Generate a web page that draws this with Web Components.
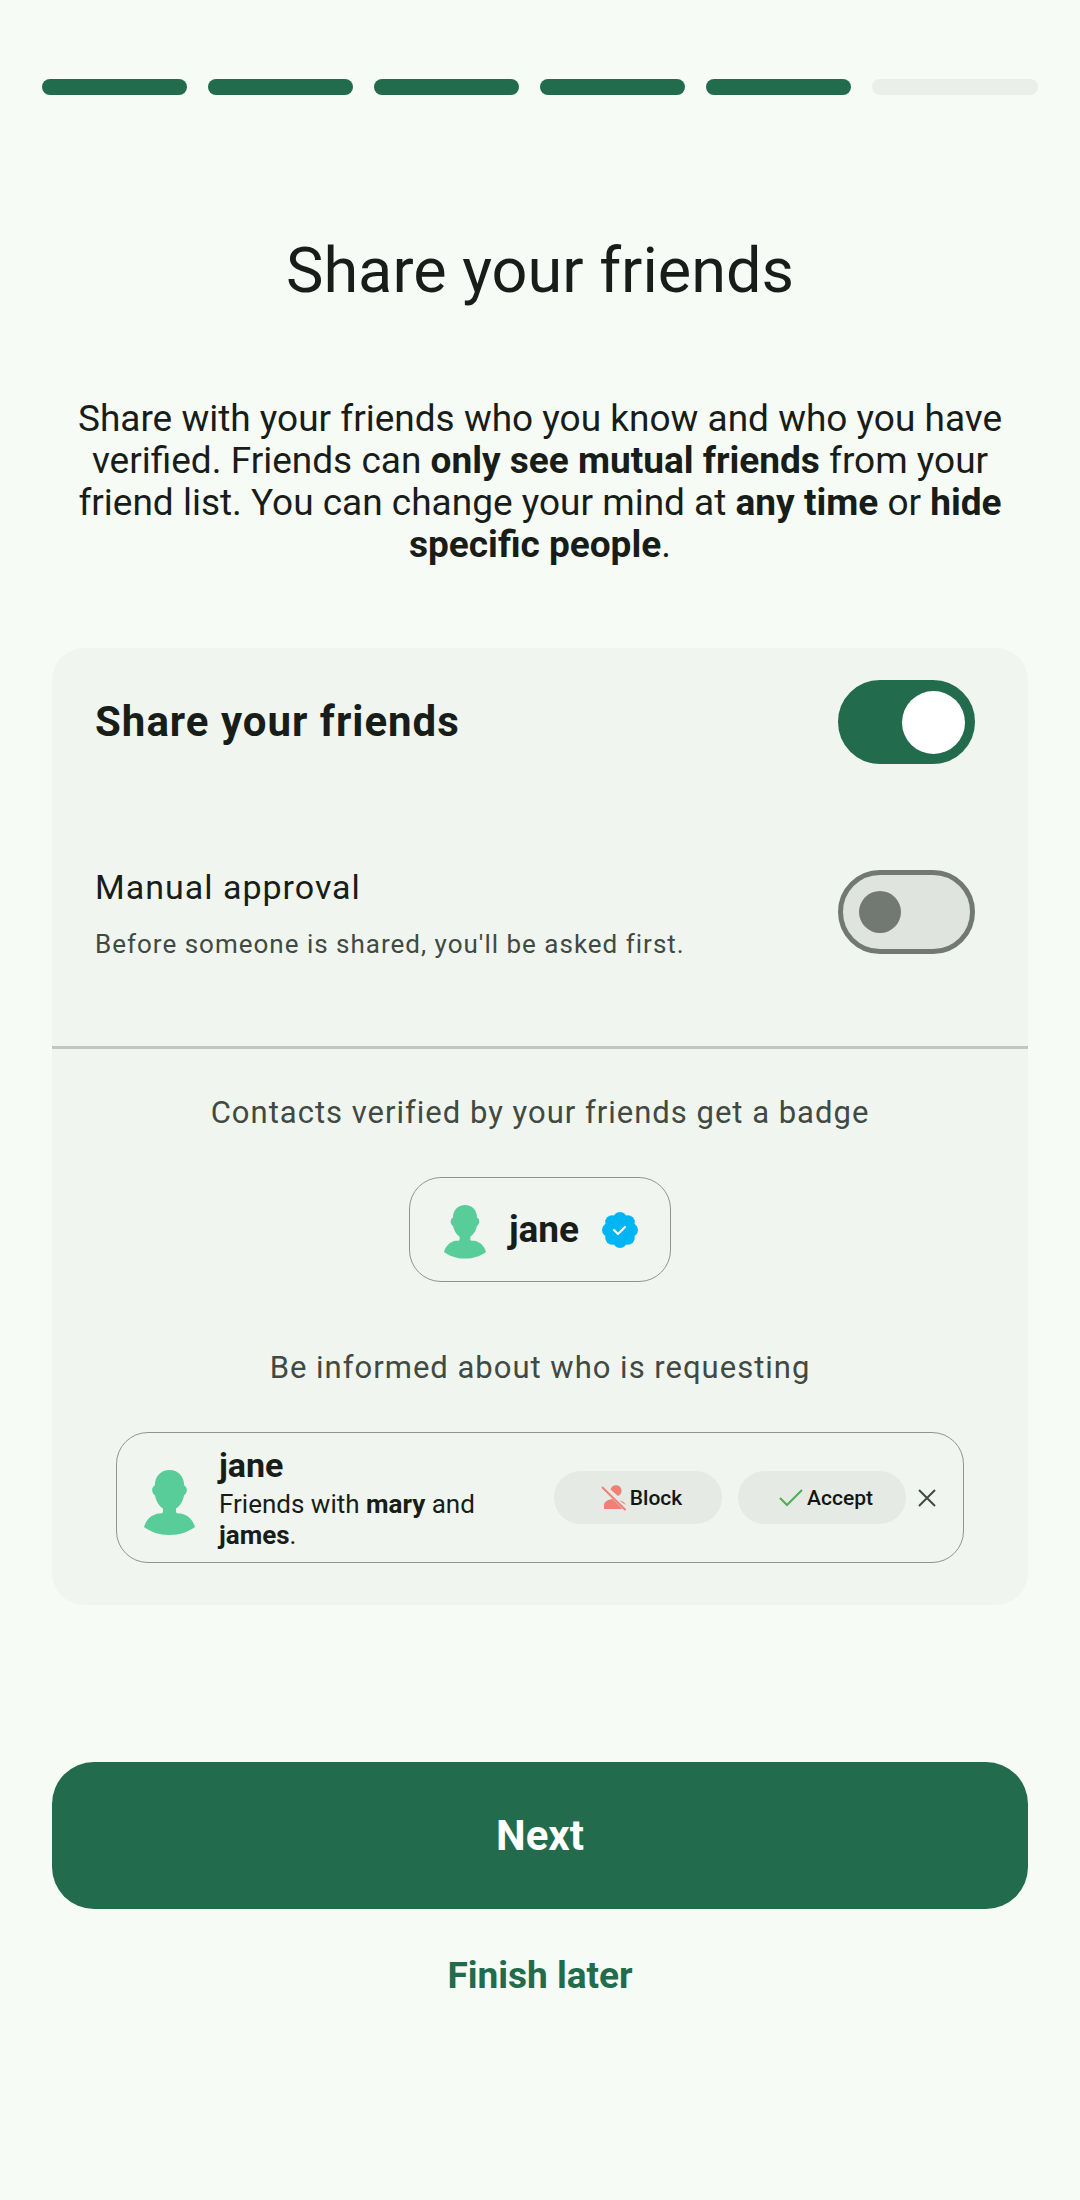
<!DOCTYPE html>
<html lang="en">
<head>
<meta charset="utf-8">
<meta name="viewport" content="width=device-width, initial-scale=1">
<title>Share your friends</title>
<style>
    body {
        margin: 0;
        background: #f6fbf5;
        color: #181d19;
        font-family: Roboto, "Liberation Sans", sans-serif;
        --primary: #226b4d;
        --outline: #717972;
        --outline-soft: #8f9690;
        --divider: #c0c9c1;
        --muted: #414943;
        --surface: #f0f5ef;
        --surface-high: #e5eae4;
        --surface-highest: #dfe4de;
    }
</style>
</head>
<body>
<setup-page></setup-page>

<script>
class SetupProgress extends HTMLElement {
    #template = `
        <style>
            :host {
                display: flex;
            }

            .step {
                flex: 1;
                height: 16px;
                margin-right: 21px;
                border-radius: 8px;
                background: var(--primary);
            }

            .step:last-child {
                margin-right: 0;
            }

            .todo {
                background: #eaefe9;
            }
        </style>
    `;


    constructor() {
        super();
        this.attachShadow({ mode: 'open' }).innerHTML = this.#template;
    }


    connectedCallback() {
        const steps = parseInt(this.getAttribute('steps'));
        const done = parseInt(this.getAttribute('done'));

        // every step owns its gap, so the last bar is longer by one gap
        for (let i = 0; i < steps; i++) {
            const step = document.createElement('div');
            step.className = i < done ? 'step' : 'step todo';
            step.style.flexBasis = i === steps - 1 ? '21px' : '0';
            this.shadowRoot.append(step);
        }
    }
}


class SwitchRow extends HTMLElement {
    #template = `
        <style>
            :host {
                display: block;
            }

            label {
                display: flex;
                align-items: center;
                justify-content: space-between;
                gap: 42px;
            }

            .text {
                display: flex;
                flex-direction: column;
                gap: 16px;
            }

            .title {
                font-size: 34px;
                line-height: 48px;
                letter-spacing: 1px;
            }

            :host([strong]) .title {
                font-size: 42px;
                font-weight: 700;
            }

            ::slotted(*) {
                color: var(--muted);
                font-size: 26px;
                line-height: 34px;
                letter-spacing: 1px;
            }

            input {
                appearance: none;
                box-sizing: border-box;
                flex: none;
                display: flex;
                align-items: center;
                width: 137px;
                height: 84px;
                margin: 0;
                padding: 0 16px;
                border: 5px solid var(--outline);
                border-radius: 42px;
                background: var(--surface-highest);
            }

            input::before {
                content: "";
                width: 42px;
                height: 42px;
                border-radius: 50%;
                background: var(--outline);
            }

            input:checked {
                justify-content: flex-end;
                padding: 0 5px;
                border-color: var(--primary);
                background: var(--primary);
            }

            input:checked::before {
                width: 63px;
                height: 63px;
                background: #fff;
            }
        </style>

        <label>
            <span class="text">
                <span class="title"></span>
            </span>
            <input type="checkbox" role="switch">
        </label>
    `;


    constructor() {
        super();
        this.attachShadow({ mode: 'open' }).innerHTML = this.#template;
    }


    connectedCallback() {
        this.shadowRoot.querySelector('.title').textContent = this.getAttribute('label');
        this.shadowRoot.querySelector('input').checked = this.hasAttribute('checked');

        if (this.childElementCount > 0) {
            this.shadowRoot.querySelector('.text').append(document.createElement('slot'));
        }
    }
}


class UserAvatar extends HTMLElement {
    #template = `
        <style>
            :host {
                display: block;
                flex: none;
                width: 42px;
            }

            svg {
                display: block;
                width: 100%;
            }
        </style>

        <svg viewBox="0 0 51 65" fill="#58cd9a" aria-hidden="true">
            <path d="M25.500 0C34 0 40 6 40.200 15.500C43.500 16.500 44 23 40 25.500C39 31 36 36 32 38.500V41.500C32 43.500 34 43.500 37 43.500C44 45 49 50 51 57C44 62 36 65 25.500 65C15 65 7 62 0 57C2 50 7 45 14 43.500C17 43.500 19 43.500 19 41.500V38.500C15 36 12 31 11 25.500C7 23 7.500 16.500 10.800 15.500C11 6 17 0 25.500 0Z"/>
        </svg>
    `;


    constructor() {
        super();
        this.attachShadow({ mode: 'open' }).innerHTML = this.#template;
    }
}


class VerifiedContact extends HTMLElement {
    #template = `
        <style>
            :host {
                display: flex;
                align-items: center;
                gap: 23px;
                box-sizing: border-box;
                height: 105px;
                padding: 0 32px 0 34px;
                border: 1px solid var(--outline-soft);
                border-radius: 32px;
                font-size: 37px;
                font-weight: 700;
                line-height: 44px;
            }

            svg {
                width: 36px;
                height: 36px;
            }

            user-avatar {
                padding-top: 5px;
            }
        </style>

        <user-avatar></user-avatar>
        <slot></slot>
        <svg viewBox="0 0 36 36" role="img" aria-label="Verified">
            <g fill="#00b5f2">
                <circle cx="18" cy="18" r="14"/>
                <circle cx="18" cy="7" r="7"/>
                <circle cx="25.800" cy="10.200" r="7"/>
                <circle cx="29" cy="18" r="7"/>
                <circle cx="25.800" cy="25.800" r="7"/>
                <circle cx="18" cy="29" r="7"/>
                <circle cx="10.200" cy="25.800" r="7"/>
                <circle cx="7" cy="18" r="7"/>
                <circle cx="10.200" cy="10.200" r="7"/>
            </g>
            <path d="M12 18l4 4 7-7" fill="none" stroke="#fff" stroke-width="2" stroke-linecap="round" stroke-linejoin="round"/>
        </svg>
    `;


    constructor() {
        super();
        this.attachShadow({ mode: 'open' }).innerHTML = this.#template;
    }
}


class ContactRequest extends HTMLElement {
    #template = `
        <style>
            :host {
                display: flex;
                align-items: center;
                box-sizing: border-box;
                min-height: 131px;
                padding: 9px 15px 9px 27px;
                border: 1px solid var(--outline-soft);
                border-radius: 32px;
            }

            user-avatar {
                width: 51px;
                margin: 10px 24px 0 0;
            }

            .text {
                flex: 1;
                font-size: 26px;
                line-height: 31px;
            }

            .name {
                font-size: 34px;
                font-weight: 700;
                line-height: 40px;
                padding-bottom: 4px;
            }

            button {
                display: flex;
                align-items: center;
                justify-content: center;
                height: 53px;
                padding: 0;
                border: 0;
                border-radius: 27px;
                background: var(--surface-high);
                color: #111713;
                font: 500 21px/28px Roboto, "Liberation Sans", sans-serif;
            }

            .action {
                width: 168px;
                margin-right: 16px;
                padding-left: 7px;
                gap: 3px;
            }

            .action + .action {
                margin-right: 0;
            }

            .close {
                width: 42px;
                background: none;
            }

            svg {
                flex: none;
            }
        </style>

        <user-avatar></user-avatar>
        <div class="text">
            <div class="name"></div>
            <slot></slot>
        </div>
        <button class="action" type="button">
            <svg width="26" height="26" viewBox="0 0 26 26" fill="#f08074" aria-hidden="true">
                <path d="M3 24V20C3 17 7 14.500 11.500 14L21.500 24Z"/>
                <path d="M9.500 4.500A5.600 5.600 0 1 1 17 11Z"/>
                <path d="M18.500 15.500C21.500 16 24 17.500 24.500 20Z"/>
                <path d="M1 2L24.500 25" stroke="#f08074" stroke-width="2"/>
            </svg>
            Block
        </button>
        <button class="action" type="button">
            <svg width="26" height="26" viewBox="0 0 26 26" fill="none" stroke="#4caf50" stroke-width="2" aria-hidden="true">
                <path d="M2 13L9 20L24 5"/>
            </svg>
            Accept
        </button>
        <button class="close" type="button" aria-label="Dismiss">
            <svg width="18" height="18" viewBox="0 0 18 18" stroke="#414943" stroke-width="2" aria-hidden="true">
                <path d="M1 1L17 17M17 1L1 17"/>
            </svg>
        </button>
    `;


    constructor() {
        super();
        this.attachShadow({ mode: 'open' }).innerHTML = this.#template;
    }


    connectedCallback() {
        this.shadowRoot.querySelector('.name').textContent = this.getAttribute('name');
    }
}


class SetupPage extends HTMLElement {
    #template = `
        <style>
            :host {
                display: flex;
                flex-direction: column;
                padding: 79px 52px 0;
            }

            setup-progress {
                margin: 0 -10px;
            }

            h1 {
                margin: 139px 0 0;
                font-size: 63px;
                font-weight: 400;
                line-height: 74px;
                text-align: center;
            }

            .intro {
                margin: 90px 10px 0;
                font-size: 37px;
                line-height: 42px;
                text-align: center;
            }

            .card {
                margin-top: 82px;
                border-radius: 32px;
                background: var(--surface);
            }

            .settings {
                display: flex;
                flex-direction: column;
                gap: 99px;
                padding: 32px 53px 85px 43px;
                border-bottom: 3px solid var(--divider);
            }

            .preview {
                display: flex;
                flex-direction: column;
                align-items: center;
                padding: 42px 64px;
            }

            .hint {
                margin: 0 0 42px;
                color: var(--muted);
                font-size: 31px;
                line-height: 44px;
                letter-spacing: 1px;
                text-align: center;
            }

            verified-contact {
                margin-bottom: 64px;
            }

            contact-request {
                align-self: stretch;
            }

            .next,
            .later {
                border: 0;
                font-family: inherit;
                font-weight: 700;
            }

            .next {
                height: 147px;
                margin-top: 157px;
                border-radius: 42px;
                background: var(--primary);
                color: #fff;
                font-size: 42px;
            }

            .later {
                align-self: center;
                margin-top: 42px;
                padding: 0;
                background: none;
                color: var(--primary);
                font-size: 37px;
                line-height: 50px;
            }
        </style>

        <setup-progress steps="6" done="5"></setup-progress>
        <h1>Share your friends</h1>
        <p class="intro">Share with your friends who you know and who you have verified. Friends can <b>only see mutual friends</b> from your friend list. You can change your mind at <b>any time</b> or <b>hide specific people</b>.</p>
        <section class="card">
            <div class="settings">
                <switch-row label="Share your friends" strong checked></switch-row>
                <switch-row label="Manual approval"><span>Before someone is shared, you'll be asked first.</span></switch-row>
            </div>
            <div class="preview">
                <p class="hint">Contacts verified by your friends get a badge</p>
                <verified-contact>jane</verified-contact>
                <p class="hint">Be informed about who is requesting</p>
                <contact-request name="jane">Friends with <b>mary</b> and <b>james</b>.</contact-request>
            </div>
        </section>
        <button class="next" type="button">Next</button>
        <button class="later" type="button">Finish later</button>
    `;


    constructor() {
        super();
        this.attachShadow({ mode: 'open' }).innerHTML = this.#template;
    }
}

window.customElements.define('setup-progress', SetupProgress);
window.customElements.define('switch-row', SwitchRow);
window.customElements.define('user-avatar', UserAvatar);
window.customElements.define('verified-contact', VerifiedContact);
window.customElements.define('contact-request', ContactRequest);
window.customElements.define('setup-page', SetupPage);
</script>
</body>
</html>
